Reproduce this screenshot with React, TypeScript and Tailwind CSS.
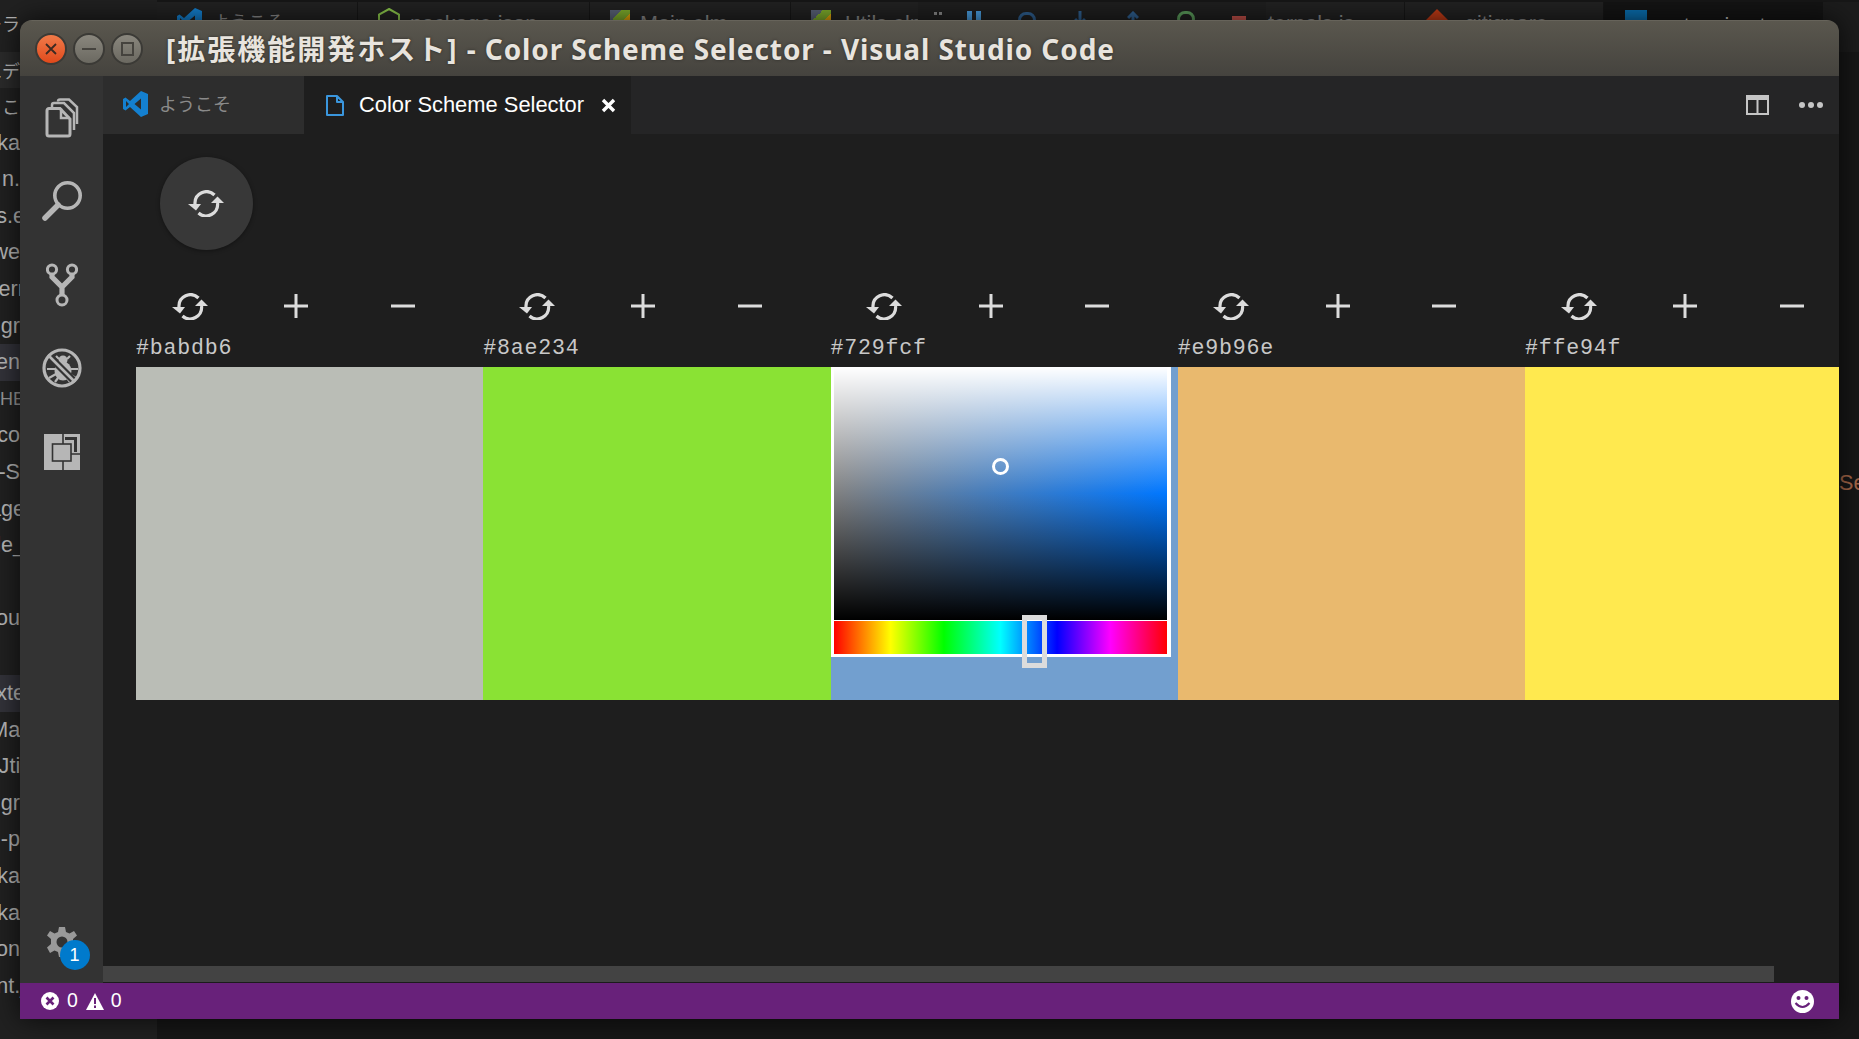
import React from "react";

const SANS = "font-['Liberation_Sans',Arial,sans-serif]";
const GRAY = "#b6b6b6";

function SyncIcon({ className = "" }: { className?: string }) {
  return (
    <svg width="36" height="27" viewBox="0 0 36 27" className={className} fill="none">
      <path d="M26.5 5 A11.5 11.5 0 0 0 7 14" stroke="#dcdcdc" strokeWidth="3.2" />
      <path d="M0 14 H13 L8 20.5 Z" fill="#dcdcdc" />
      <path d="M10.5 23 A11.5 11.5 0 0 0 29.5 13" stroke="#dcdcdc" strokeWidth="3.2" />
      <path d="M23 13 H36 L29.5 6.5 Z" fill="#dcdcdc" />
    </svg>
  );
}

function Plus() {
  return (
    <svg width="24" height="24" viewBox="0 0 24 24">
      <path d="M0 12H24M12 0V24" stroke="#dcdcdc" strokeWidth="3" />
    </svg>
  );
}
function Minus() {
  return (
    <svg width="24" height="24" viewBox="0 0 24 24">
      <path d="M0 12H24" stroke="#dcdcdc" strokeWidth="3" />
    </svg>
  );
}

function VsLogo() {
  return (
    <svg width="25" height="26" viewBox="0 0 25 26">
      <path d="M18 0 L25 3 V23 L18 26 L7 16 L2.5 19.5 L0 18 V8 L2.5 6.5 L7 10 Z M18 7.5 L11.5 13 L18 18.5 Z M3 10 V16 L6 13 Z" fill="#1480d0" fillRule="evenodd" />
    </svg>
  );
}

function FileIcon() {
  return (
    <svg width="18" height="21" viewBox="0 0 18 21" fill="none">
      <path d="M1 1 H11 L17 7 V20 H1 Z M11 1 V7 H17" stroke="#3a96dd" strokeWidth="2" strokeLinejoin="round" />
    </svg>
  );
}

function FilesIcon() {
  return (
    <svg width="34" height="40" viewBox="0 0 34 40" fill="none" stroke={GRAY}>
      <path d="M2 12.5 a2 2 0 0 1 2-2 H15 L25 21 V36 a2 2 0 0 1 -2 2 H4 a2 2 0 0 1 -2-2 Z" strokeWidth="3" />
      <path d="M16 10.5 V20 H25" strokeWidth="2.5" />
      <path d="M7 9 V7 a2 2 0 0 1 2-2 H19 L29 15 V32" strokeWidth="2.5" />
      <path d="M13 3.5 a2 2 0 0 1 2-2 H24 L32 9 V26" strokeWidth="2.5" />
    </svg>
  );
}
function SearchIcon() {
  return (
    <svg width="40" height="40" viewBox="0 0 40 40" fill="none" stroke={GRAY}>
      <circle cx="25.5" cy="14.5" r="12.7" strokeWidth="3.6" />
      <path d="M16 24 L3 37" strokeWidth="5.5" strokeLinecap="round" />
    </svg>
  );
}
function GitIcon() {
  return (
    <svg width="32" height="44" viewBox="0 0 32 44" fill="none" stroke={GRAY}>
      <circle cx="6" cy="6.5" r="4.6" strokeWidth="3" />
      <circle cx="26" cy="6.5" r="4.6" strokeWidth="3" />
      <circle cx="16" cy="37" r="5" strokeWidth="3" />
      <path d="M6 11 V14 L16 24 L26 14 V11 M16 24 V32" strokeWidth="5.2" />
    </svg>
  );
}
function DebugIcon() {
  return (
    <svg width="40" height="40" viewBox="0 0 40 40" fill="none">
      <ellipse cx="21" cy="23" rx="8.5" ry="9.5" fill={GRAY} />
      <circle cx="21" cy="12" r="4.5" fill={GRAY} />
      <path d="M14 8 L17 11 M28 8 L25 11 M5 21 H13 M29 21 H36 M7 30 L14 26 M34 30 L27 26 M13 34 L16 30 M28 34 L25 30" stroke={GRAY} strokeWidth="2.2" />
      <path d="M6 7 L33 34" stroke="#333" strokeWidth="7" />
      <path d="M6 7 L33 34" stroke={GRAY} strokeWidth="2.6" />
      <circle cx="20" cy="20" r="18" stroke={GRAY} strokeWidth="3.2" />
    </svg>
  );
}
function ExtIcon() {
  return (
    <svg width="36" height="36" viewBox="0 0 36 36" fill="none">
      <rect width="36" height="36" fill={GRAY} />
      <path d="M21 3 H33 V18 H30 V6 H21 Z" fill="#333" />
      <rect x="8.5" y="10" width="18.5" height="17" stroke="#333" strokeWidth="1.6" />
      <path d="M19 0 V10 M19 27 V36 M27 20 H36" stroke="#333" strokeWidth="1.6" />
    </svg>
  );
}
function GearIcon() {
  return (
    <svg width="32" height="32" viewBox="0 0 32 32">
      <path fillRule="evenodd" fill="#999" d="M13 1 H19 L20 6 L23.5 7.5 L28 5 L31 9.5 L27 13 V18 L31 21.5 L28 27 L23.5 24.5 L20 26 L19 31 H13 L12 26 L8.5 24.5 L4 27 L1 21.5 L5 18 V13 L1 9.5 L4 5 L8.5 7.5 L12 6 Z M16 10.5 A5.5 5.5 0 1 0 16 21.5 A5.5 5.5 0 1 0 16 10.5 Z" />
    </svg>
  );
}

function ColumnTools({ hex }: { hex: string }) {
  return (
    <div className="flex flex-col">
      <div className="flex h-[42px] items-center">
        <button className="flex w-[107px] justify-center"><SyncIcon /></button>
        <button className="flex w-[106px] justify-center"><Plus /></button>
        <button className="flex w-[107px] justify-center"><Minus /></button>
      </div>
      <div className="h-[40px] pt-[6px] text-[21.6px] leading-[30px] tracking-[0.8px] text-[#c8c8c8] font-['Liberation_Mono',monospace]">{hex}</div>
    </div>
  );
}

function Picker() {
  return (
    <div className="absolute left-0 top-0 h-[290px] w-[340px] bg-white pl-[3px] pr-[4px] pb-[3px]">
      <div className="relative h-[253px] w-full bg-[hsl(212,100%,50%)]">
        <div className="absolute inset-0 bg-gradient-to-r from-[#808080] to-[rgba(128,128,128,0)]" />
        <div className="absolute inset-0 bg-[linear-gradient(to_bottom,#fff_0%,rgba(255,255,255,0)_50%,rgba(0,0,0,0)_50%,#000_100%)]" />
        <div className="absolute left-[158px] top-[91px] h-[17px] w-[17px] rounded-full border-[3px] border-white" />
      </div>
      <div className="relative mt-[1px] h-[33px] w-full bg-[linear-gradient(to_right,#f00_0%,#ff0_17%,#0f0_33%,#0ff_50%,#00f_67%,#f0f_83%,#f00_100%)]">
        <div className="absolute left-[188px] top-[-6px] h-[53px] w-[25px] border-[5px] border-[#dcdcdc]" />
      </div>
    </div>
  );
}

const columns = [
  { hex: "#babdb6", bg: "bg-[#babdb6]" },
  { hex: "#8ae234", bg: "bg-[#8ae234]" },
  { hex: "#729fcf", bg: "bg-[#729fcf]", picker: true },
  { hex: "#e9b96e", bg: "bg-[#e9b96e]" },
  { hex: "#ffe94f", bg: "bg-[#ffe94f]" },
];

const sideTop = ["こ", "ka", "n.", "s.e", "we", "err", "gr", "en", "HE", "co", "-S", "age", "le_", "", "ou"];
const sideBottom = ["xte", "Mai", "Jtil", "gr", "-p", "ka", "ka", "on", "nt.j"];
const shifted = ["s.e", "err", "age", "le_", "xte", "Mai", "Jtil", "nt.j", "HE"];

function BgTab({ w, children }: { w: string; children: React.ReactNode }) {
  return (
    <div className={`${w} flex h-[50px] shrink-0 items-start gap-[10px] border-r border-[#161616] bg-[#222] pt-[6px] pl-[20px]`}>
      {children}
    </div>
  );
}

function ElmLogo() {
  return (
    <span className="mt-[2px] h-[20px] w-[20px] shrink-0 bg-[linear-gradient(135deg,#5a6378_30%,#7fae2c_30%,#7fae2c_60%,#e5a50a_60%)]" />
  );
}

export default function App() {
  return (
    <div className={`relative flex h-[1039px] w-[1859px] overflow-hidden bg-[#171717] ${SANS}`}>
      {/* desktop behind the window */}
      <aside className="flex h-full w-[157px] shrink-0 flex-col bg-[#212121] text-[21.6px] text-[#b8b8b8]">
        <div className="flex h-[52px] items-center justify-end overflow-hidden whitespace-nowrap pb-[6px] pr-[137px] text-[18px] font-['Noto_Sans_CJK_JP',sans-serif]">ーラ</div>
        <div className="flex h-[36px] items-center justify-end overflow-hidden whitespace-nowrap bg-[#2b2b2b] pr-[137px] text-[18px] font-['Noto_Sans_CJK_JP',sans-serif]">エデ</div>
        {sideTop.map((t, i) => (
          <div
            key={i}
            className={`flex h-[36.6px] items-center justify-end overflow-hidden whitespace-nowrap ${shifted.includes(t) ? "pr-[132px]" : "pr-[137px]"} ${t === "en" ? "bg-[#33333a]" : ""} ${t === "HE" ? "text-[18px] text-[#999]" : ""} ${t === "こ" ? "font-['Noto_Sans_CJK_JP',sans-serif] text-[18px]" : ""}`}
          >
            {t}
          </div>
        ))}
        <div className="h-[38px]" />
        {sideBottom.map((t, i) => (
          <div
            key={i}
            className={`flex h-[36.6px] items-center justify-end overflow-hidden whitespace-nowrap ${shifted.includes(t) ? "pr-[132px]" : "pr-[137px]"} ${i === 0 ? "bg-[#33333a]" : ""}`}
          >
            {t}
          </div>
        ))}
      </aside>
      <div className="flex min-w-0 flex-1 flex-col">
        <div className="mt-[2px] flex h-[50px] items-start bg-[#1c1c1c] text-[21.6px] text-[#8a8a8a]">
          <BgTab w="w-[201px]"><VsLogo /><span className="font-['Noto_Sans_CJK_JP',sans-serif] text-[18px]">ようこそ</span></BgTab>
          <BgTab w="w-[232px]">
            <svg width="22" height="24" viewBox="0 0 22 24" fill="none"><path d="M11 1 L21 6.5 V17.5 L11 23 L1 17.5 V6.5 Z" stroke="#8cc84b" strokeWidth="2" /></svg>
            <span>package.json</span>
          </BgTab>
          <BgTab w="w-[201px]">
            <ElmLogo />
            <span>Main.elm</span>
          </BgTab>
          <div className="flex h-[50px] w-[127px] shrink-0 items-start gap-[14px] bg-[#222] pt-[6px] pl-[20px]">
            <ElmLogo />
            <span className="whitespace-nowrap">Utils.elm</span>
          </div>
          <div className="flex h-[50px] w-[348px] shrink-0 items-start bg-[#1f1f1f] pt-[9px]">
            <span className="ml-[16px] grid h-[16px] w-[8px] grid-cols-1 pt-[1px]">
              <span className="h-[3px] w-[8px] border-x-[3px] border-[#888]" />
            </span>
            <div className="ml-[5px] flex">
              <span className="flex w-[53px] justify-center"><span className="h-[16px] w-[14px] border-x-[5px] border-[#4a9ee0]" /></span>
              <span className="flex w-[53px] justify-center"><span className="mt-[1px] h-[16px] w-[18px] rounded-full border-[3px] border-[#2f5f8f]" /></span>
              <span className="flex w-[53px] justify-center">
                <svg width="12" height="16" viewBox="0 0 12 16" fill="none"><path d="M6 0V12M1 8L6 13L11 8" stroke="#2f5f8f" strokeWidth="3" /></svg>
              </span>
              <span className="flex w-[53px] justify-center">
                <svg width="12" height="16" viewBox="0 0 12 16" fill="none"><path d="M6 16V3M1 7L6 2L11 7" stroke="#2f5f8f" strokeWidth="3" /></svg>
              </span>
              <span className="flex w-[53px] justify-center"><span className="h-[16px] w-[18px] rounded-full border-[3px] border-[#5a9a5a]" /></span>
              <span className="flex w-[53px] justify-center"><span className="mt-[5px] h-[14px] w-[14px] bg-[#c5524a]" /></span>
            </div>
          </div>
          <BgTab w="w-[139px]"><span className="-ml-[18px] whitespace-nowrap">ternals.js</span></BgTab>
          <BgTab w="w-[199px]">
            <svg width="24" height="24" viewBox="0 0 24 24"><path d="M12 1 L23 12 L12 23 L1 12 Z" fill="#c23b16" /></svg>
            <span>.gitignore</span>
          </BgTab>
          <div className="flex h-[50px] w-[219px] shrink-0 items-start gap-[14px] bg-[#141414] pt-[8px] pl-[21px]">
            <span className="h-[24px] w-[22px] shrink-0 bg-[#0a6fb0]" />
            <span className="whitespace-nowrap text-[#bbb]">extension.ts</span>
          </div>
        </div>
        <div className="flex flex-1 items-center justify-end pb-[124px] text-[21.6px] text-[#a8694a]">
          <span className="w-[20px] overflow-hidden whitespace-nowrap">Se</span>
        </div>
      </div>

      {/* the window */}
      <div className="absolute left-[20px] top-[20px] flex h-[999px] w-[1819px] flex-col overflow-hidden rounded-t-[12px] shadow-[0_0_28px_rgba(0,0,0,0.75)]">
        <header className="flex h-[56px] shrink-0 items-center border-t border-[#66635a] bg-gradient-to-b from-[#5a574e] to-[#45433e]">
          <div className="ml-[15px] flex items-center gap-[6px]">
            <span className="flex h-[32px] w-[32px] items-center justify-center rounded-full border-2 border-[#3b3a36] bg-gradient-to-b from-[#f07a48] to-[#e0491a]">
              <svg width="12" height="12" viewBox="0 0 12 12"><path d="M1 1L11 11M11 1L1 11" stroke="#3c2a22" strokeWidth="1.8" /></svg>
            </span>
            <span className="flex h-[32px] w-[32px] items-center justify-center rounded-full border-2 border-[#3b3a36] bg-gradient-to-b from-[#8a877e] to-[#6b6961]">
              <span className="h-[2px] w-[14px] bg-[#45433e]" />
            </span>
            <span className="flex h-[32px] w-[32px] items-center justify-center rounded-full border-2 border-[#3b3a36] bg-gradient-to-b from-[#8a877e] to-[#6b6961]">
              <span className="h-[14px] w-[13px] border-2 border-[#45433e]" />
            </span>
          </div>
          <h1 className="ml-[23px] whitespace-nowrap text-[28px] font-bold leading-none tracking-[0.9px] text-[#e8e4de] [text-shadow:0_0_3px_#2b2a27] font-['Noto_Sans','Noto_Sans_CJK_JP',sans-serif]">
            <span className="tracking-[2px]">[拡張機能開発ホスト]</span> - Color Scheme Selector - Visual Studio Code
          </h1>
        </header>

        <div className="flex min-h-0 flex-1">
          <nav className="flex w-[83px] shrink-0 flex-col items-center bg-[#333333]">
            <div className="flex h-[83px] items-center"><FilesIcon /></div>
            <div className="flex h-[84px] items-center"><SearchIcon /></div>
            <div className="flex h-[83px] items-center"><GitIcon /></div>
            <div className="flex h-[84px] items-center"><DebugIcon /></div>
            <div className="flex h-[83px] items-center"><ExtIcon /></div>
            <div className="relative mt-auto mb-[25px]">
              <GearIcon />
              <span className="absolute left-[14px] top-[14px] flex h-[30px] w-[30px] items-center justify-center rounded-full bg-[#007acc] text-[18px] text-white">1</span>
            </div>
          </nav>

          <main className="flex min-w-0 flex-1 flex-col bg-[#1e1e1e]">
            <div className="flex h-[58px] shrink-0 items-center bg-[#252526]">
              <div className="flex h-full w-[201px] items-center gap-[11px] bg-[#2d2d2d] pb-[3px] pl-[20px] text-[18px] text-[#8a8a8a] font-['Noto_Sans_CJK_JP',sans-serif]">
                <VsLogo />
                <span>ようこそ</span>
              </div>
              <div className="flex h-full w-[327px] items-center bg-[#1e1e1e] pl-[22px] text-[21.9px] text-white">
                <FileIcon />
                <span className="ml-[15px] whitespace-nowrap">Color Scheme Selector</span>
                <svg className="ml-[17px]" width="15" height="15" viewBox="0 0 15 15"><path d="M2 2L13 13M13 2L2 13" stroke="#fff" strokeWidth="3.4" /></svg>
              </div>
              <div className="ml-auto flex items-center pr-[16px]">
                <svg width="23" height="20" viewBox="0 0 23 20" fill="none">
                  <rect x="1" y="1" width="21" height="18" stroke="#c5c5c5" strokeWidth="2" />
                  <rect x="1" y="1" width="21" height="4" fill="#c5c5c5" />
                  <path d="M11.5 4V19" stroke="#c5c5c5" strokeWidth="2" />
                </svg>
                <span className="ml-[30px] flex gap-[3px]">
                  <span className="h-[6px] w-[6px] rounded-full bg-[#c5c5c5]" />
                  <span className="h-[6px] w-[6px] rounded-full bg-[#c5c5c5]" />
                  <span className="h-[6px] w-[6px] rounded-full bg-[#c5c5c5]" />
                </span>
              </div>
            </div>

            <div className="min-h-0 flex-1 overflow-hidden pl-[33px] pt-[23px]">
              <button className="ml-[24px] flex h-[93px] w-[93px] items-center justify-center rounded-full bg-[#383838] pr-[2px] shadow-[0_1px_4px_rgba(0,0,0,0.4)]">
                <SyncIcon />
              </button>
              <div className="mt-[35px] flex w-max">
                {columns.map((c) => (
                  <div key={c.hex} className="w-[347.25px] shrink-0">
                    <ColumnTools hex={c.hex} />
                    <div className={`relative h-[333px] ${c.bg}`}>{c.picker && <Picker />}</div>
                  </div>
                ))}
              </div>
            </div>

            <div className="h-[17px] shrink-0 border-b border-[#1b1b1b]">
              <div className="h-[16px] w-[1671px] bg-[#434343]" />
            </div>
          </main>
        </div>

        <footer className="flex h-[36px] shrink-0 items-center bg-[#68217a] text-[19.5px] text-white">
          <svg className="ml-[21px]" width="18" height="18" viewBox="0 0 18 18">
            <circle cx="9" cy="9" r="9" fill="#fff" />
            <path d="M5.5 5.5L12.5 12.5M12.5 5.5L5.5 12.5" stroke="#68217a" strokeWidth="2.6" />
          </svg>
          <span className="ml-[8px]">0</span>
          <svg className="ml-[8px]" width="18" height="17" viewBox="0 0 18 17">
            <path d="M9 0 L18 17 H0 Z" fill="#fff" />
            <path d="M9 5V11M9 12.5V15" stroke="#68217a" strokeWidth="2" />
          </svg>
          <span className="ml-[7px]">0</span>
          <svg className="ml-auto mr-[25px]" width="23" height="23" viewBox="0 0 23 23">
            <circle cx="11.5" cy="11.5" r="11.5" fill="#fff" />
            <circle cx="7.5" cy="8" r="2" fill="#68217a" />
            <circle cx="15.5" cy="8" r="2" fill="#68217a" />
            <path d="M4.5 13 Q11.5 21 18.5 13" stroke="#68217a" strokeWidth="2" fill="none" />
          </svg>
        </footer>
      </div>
    </div>
  );
}
